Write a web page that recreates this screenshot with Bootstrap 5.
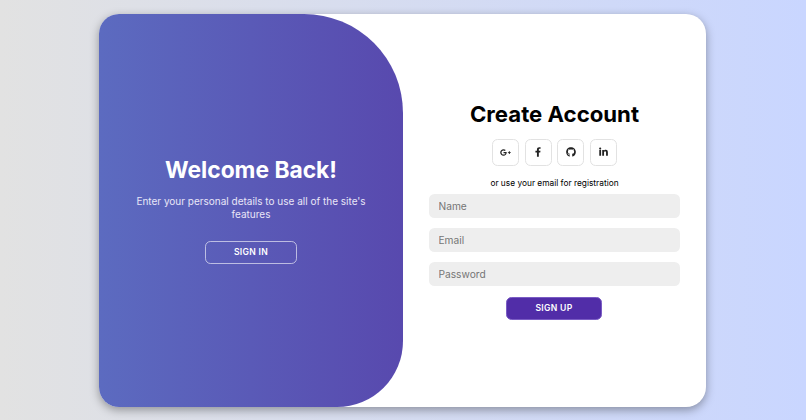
<!DOCTYPE html>
<html lang="en">
<head>
<meta charset="utf-8">
<title>Create Account</title>
<link href="https://cdn.jsdelivr.net/npm/bootstrap@5.3.0/dist/css/bootstrap.min.css" rel="stylesheet">
<style>
html,body{height:100%;}
body{background:linear-gradient(to right,#e2e2e2,#c9d6ff);font-family:"Inter","Liberation Sans",sans-serif;overflow:hidden;color:#000;padding-right:1px;}
.auth-shell{width:607px;height:393px;border-radius:20px;background:#fff;box-shadow:0 3px 10px rgba(0,0,0,.35);}
.auth-panel{width:304px;background:linear-gradient(to right,#5c6bc0,#5849ae);border-radius:20px 99px 66px 20px;color:#fff;padding:0 20px .5px;}
.auth-form{width:303px;padding:1px 26px 0;}
.panel-title{font-size:22.8px;font-weight:700;line-height:27px;margin:0 0 12px;}
.panel-text{font-size:10px;line-height:13.5px;margin:0 0 19px;color:#e9e6f7;}
.ghost-btn{width:92.5px;height:23.5px;border:1px solid rgba(255,255,255,.6);border-radius:5.5px;color:#fff;font-size:8.6px;font-weight:600;letter-spacing:.3px;padding:0;background:transparent;}
.form-title{font-size:22.2px;font-weight:700;line-height:1.2;margin:0 0 11px;}
.social-row{gap:5.7px;margin-bottom:11px;}
.social-btn{width:27px;height:27px;border:1px solid #e2e2e2;border-radius:5.5px;color:#222;}
.social-btn svg{display:block;fill:#222;}
.form-note{font-size:8.35px;line-height:12px;margin:0 0 5px;}
.auth-input.form-control{height:24px;background:#eeeeee;border:0;border-radius:5.5px;font-size:10.2px;padding:0 9.5px;}
.auth-input.form-control::placeholder{color:#757575;opacity:1;}
.auth-input+.auth-input{margin-top:10px;}
.primary-btn{display:block;width:96px;height:23.5px;margin:11px 0 0 77px;background:#512da8;border:1px solid #7a5cc4;border-radius:5.5px;color:#fff;font-size:8.6px;font-weight:600;letter-spacing:.3px;padding:0;}
.primary-btn:hover{background:#512da8;color:#fff;}
.ghost-btn:hover{color:#fff;}
</style>
</head>
<body class="d-flex align-items-center justify-content-center">
<main class="auth-shell d-flex">
  <section class="auth-panel d-flex flex-column align-items-center justify-content-center text-center">
    <h2 class="panel-title">Welcome Back!</h2>
    <p class="panel-text">Enter your personal details to use all of the site's features</p>
    <button type="button" class="btn ghost-btn">SIGN IN</button>
  </section>
  <section class="auth-form d-flex flex-column justify-content-center text-center">
    <h1 class="form-title">Create Account</h1>
    <div class="d-flex justify-content-center social-row">
      <a href="#" class="social-btn d-flex align-items-center justify-content-center" aria-label="Google Plus"><svg width="11" height="9" viewBox="0 0 640 512"><path d="M386.061 228.496c1.834 9.692 3.143 19.384 3.143 31.956C389.204 370.205 315.599 448 204.8 448c-106.084 0-192-85.915-192-192s85.916-192 192-192c51.864 0 95.083 18.859 128.611 50.292l-52.126 50.03c-14.145-13.621-39.028-29.599-76.485-29.599-65.484 0-118.92 54.221-118.92 121.277 0 67.056 53.436 121.277 118.92 121.277 75.961 0 104.513-54.745 108.965-82.773H204.8v-66.009h181.261zm185.406 6.437V179.2h-56.001v55.733h-55.733v56.001h55.733v55.733h56.001v-55.733H627.2v-56.001h-55.733z"/></svg></a>
      <a href="#" class="social-btn d-flex align-items-center justify-content-center" aria-label="Facebook"><svg width="6" height="10" viewBox="0 0 320 512"><path d="M279.14 288l14.22-92.66h-88.91v-60.13c0-25.35 12.42-50.06 52.24-50.06h40.42V6.26S260.43 0 225.36 0c-73.22 0-121.08 44.38-121.08 124.72v70.62H22.89V288h81.39v224h100.17V288z"/></svg></a>
      <a href="#" class="social-btn d-flex align-items-center justify-content-center" aria-label="GitHub"><svg width="10" height="10" viewBox="0 0 496 512"><path d="M165.9 397.4c0 2-2.3 3.6-5.2 3.6-3.3 0-5.6-1.6-5.6-3.6 0-2 2.3-3.6 5.2-3.6 3-.3 5.6 1.3 5.6 3.6zm-31.1-4.5c-.7 2 1.3 4.3 4.3 4.9 2.6 1 5.6 0 6.2-2s-1.3-4.3-4.3-5.2c-2.6-.7-5.5.3-6.2 2.3zm44.2-1.7c-2.9.7-4.9 2.6-4.6 4.9.3 2 2.9 3.3 5.9 2.6 2.9-.7 4.9-2.6 4.6-4.6-.3-1.9-3-3.2-5.9-2.9zM244.8 8C106.1 8 0 113.3 0 252c0 110.9 69.8 205.8 169.5 239.2 12.8 2.3 17.3-5.6 17.3-12.1 0-6.2-.3-40.4-.3-61.4 0 0-70 15-84.7-29.8 0 0-11.4-29.1-27.8-36.6 0 0-22.9-15.7 1.6-15.4 0 0 24.9 2 38.6 25.8 21.9 38.6 58.6 27.5 72.9 20.9 2.3-16 8.8-27.1 16-33.7-55.9-6.2-112.3-14.3-112.3-110.5 0-27.5 7.6-41.3 23.6-58.9-2.6-6.5-11.1-33.3 2.6-67.9 20.9-6.5 69 27 69 27 20-5.6 41.5-8.5 62.8-8.5s42.8 2.9 62.8 8.5c0 0 48.1-33.6 69-27 13.7 34.7 5.2 61.4 2.6 67.9 16 17.7 25.8 31.5 25.8 58.9 0 96.5-58.9 104.2-114.8 110.5 9.2 7.9 17 22.9 17 46.4 0 33.7-.3 75.4-.3 83.6 0 6.5 4.6 14.4 17.3 12.1C428.2 457.8 496 362.9 496 252 496 113.3 383.5 8 244.8 8z"/></svg></a>
      <a href="#" class="social-btn d-flex align-items-center justify-content-center" aria-label="LinkedIn"><svg width="9" height="10" viewBox="0 0 448 512"><path d="M100.28 448H7.4V148.9h92.88zM53.79 136.1C24.09 136.1 0 111.5 0 81.8a53.79 53.79 0 0 1 107.58 0c0 29.7-24.1 54.3-53.79 54.3zM447.9 448h-92.68V302.4c0-34.7-.7-79.2-48.29-79.2-48.29 0-55.69 37.7-55.69 76.7V448h-92.78V148.9h89.08v40.8h1.3c12.4-23.5 42.69-48.3 87.88-48.3 94 0 111.28 61.9 111.28 142.3V448z"/></svg></a>
    </div>
    <p class="form-note">or use your email for registration</p>
    <form>
      <input type="text" class="form-control auth-input" placeholder="Name">
      <input type="email" class="form-control auth-input" placeholder="Email">
      <input type="password" class="form-control auth-input" placeholder="Password">
      <button type="button" class="btn primary-btn">SIGN UP</button>
    </form>
  </section>
</main>
<script src="https://cdn.jsdelivr.net/npm/bootstrap@5.3.0/dist/js/bootstrap.bundle.min.js"></script>
</body>
</html>
